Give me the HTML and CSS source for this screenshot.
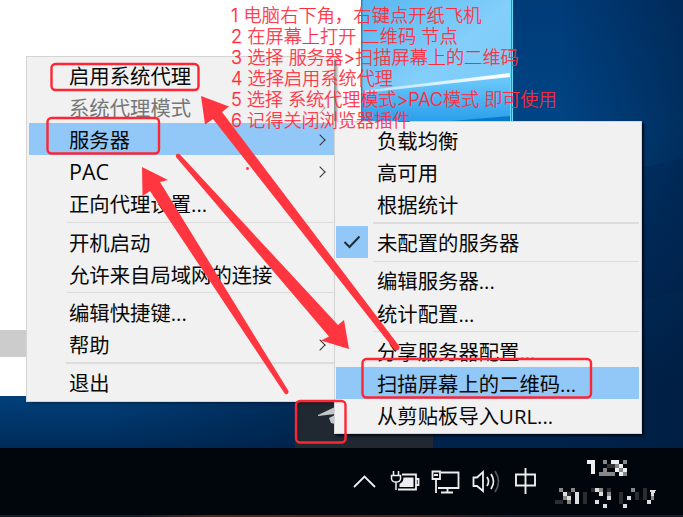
FILE: index.html
```html
<!DOCTYPE html>
<html lang="zh-CN">
<head>
<meta charset="utf-8">
<title>系统代理设置</title>
<link rel="stylesheet" href="styles.css">
</head>
<body>
<main class="desktop">
  <svg class="wallpaper" viewBox="0 0 683 517">
    <defs>
      <linearGradient id="night" x1="0" y1="0" x2="0" y2="1"><stop offset="0" stop-color="#003b78"/><stop offset=".28" stop-color="#004585"/><stop offset=".48" stop-color="#003b72"/><stop offset=".85" stop-color="#00234b"/></linearGradient>
      <linearGradient id="side"><stop offset="0" stop-color="#001a3b" stop-opacity="0"/><stop offset="1" stop-color="#001a3b" stop-opacity=".5"/></linearGradient>
      <linearGradient id="floor" x1="0" y1="0" x2="0" y2="1"><stop offset="0" stop-color="#00407b"/><stop offset="1" stop-color="#002b58"/></linearGradient>
      <linearGradient id="dusk"><stop offset="0" stop-color="#001d40" stop-opacity="0"/><stop offset="1" stop-color="#001d40" stop-opacity=".55"/></linearGradient>
      <linearGradient id="sky" x1="0" y1="0" x2="1" y2="1"><stop offset="0" stop-color="#55b7f2"/><stop offset=".5" stop-color="#83cefa"/><stop offset="1" stop-color="#7bcbfb"/></linearGradient>
      <linearGradient id="lower" x1="0" y1="0" x2="0" y2="1"><stop offset="0" stop-color="#70cbfc"/><stop offset="1" stop-color="#2a9eeb"/></linearGradient>
      <linearGradient id="ray"><stop offset="0" stop-color="#fff" stop-opacity=".4"/><stop offset="1" stop-color="#fff"/></linearGradient>
    </defs>
    <rect width="683" height="450" fill="url(#night)"/>
    <rect x="560" width="123" height="450" fill="url(#side)"/>
    <path d="M642 168 683 158V290L642 300Z" fill="#001d46" opacity=".25"/>
    <rect y="396" width="300" height="52" fill="url(#floor)"/>
    <rect x="110" y="396" width="190" height="52" fill="url(#dusk)"/>
    <rect width="361" height="396" fill="#fff"/>
    <rect y="330" width="26" height="27" fill="#ccc"/>
    <rect x="361" width="152" height="122" fill="url(#sky)"/>
    <path d="M361 94 511 76V122H361Z" fill="url(#lower)"/>
    <path d="M361 91 511 73V77L361 93Z" fill="url(#ray)"/>
    <path d="M440 122 511 116V122Z" fill="#0879ca"/>
    <path d="M361 0h1.5v122H361z" fill="#2d83b6"/>
    <path d="M510 0h3v122h-3z" fill="#69d9f8"/><path d="M511 0h1v122h-1z" fill="#298fc3"/>
    <path d="M295 402H433V448H295Z" fill="#202832"/>
    <path d="M318 415 335 407V414L318 416ZM329 418 335 415V424L331 423Z" fill="#c4c7ca"/>
  </svg>

  <nav class="menu main-menu">
    <div class="item">启用系统代理</div>
    <div class="item disabled">系统代理模式<i class="chevron"></i></div>
    <div class="item active">服务器<i class="chevron"></i></div>
    <div class="item"><span class="latin">PAC</span><i class="chevron"></i></div>
    <div class="item">正向代理设置...</div>
    <hr>
    <div class="item">开机启动</div>
    <div class="item">允许来自局域网的连接</div>
    <hr>
    <div class="item">编辑快捷键...</div>
    <div class="item">帮助<i class="chevron"></i></div>
    <hr>
    <div class="item">退出</div>
  </nav>

  <nav class="menu server-menu">
    <div class="item">负载均衡</div>
    <div class="item">高可用</div>
    <div class="item">根据统计</div>
    <hr>
    <div class="item"><span class="check"><svg width="18" height="14" viewBox="0 0 18 14"><path d="M1.5 7 6.5 12 16.500 1.500" fill="none" stroke="#222a32" stroke-width="2"/></svg></span>未配置的服务器</div>
    <hr>
    <div class="item">编辑服务器...</div>
    <div class="item">统计配置...</div>
    <hr>
    <div class="item">分享服务器配置...</div>
    <div class="item active">扫描屏幕上的二维码...</div>
    <div class="item">从剪贴板导入URL...</div>
  </nav>

  <footer class="taskbar">
    <svg width="683" height="69" viewBox="0 448 683 69" fill="none" stroke="#eee" stroke-width="1.8">
      <path d="M354 487 364.500 476.500 375 487"/>
      <path d="M402 474.500H416V489.500H398M416 479H418.500V485H416"/>
      <path d="M403.500 477.500H413.500V487H399.500V484Q403.500 482 403.500 477.500Z" fill="#eee" stroke="none"/>
      <path d="M393.500 471V476M398.500 471V476M391.500 475.500H400.500V479Q400 482 396 482 392 482 391.500 479ZM396 482V490" stroke-width="1.5"/>
      <path d="M441 472.500H458.500V488H438M447.500 488V492.500M441 492.500H453M432.500 471.500H440V479H432.500ZM434 475H438M436 479V493"/>
      <path d="M473.500 477.500H477L483 472V491L477 486H473.500Z"/>
      <path d="M487 477Q490 481.500 487 486M491 474Q496 481.500 491 489"/>
      <path d="M495 471Q502 481.500 495 492" stroke="#555"/>
      <path d="M516 474.500H535V485.500H516ZM525.500 468V494" stroke-width="1.9"/>
    </svg>
    <svg class="clock" width="112" height="60" viewBox="550 450 112 60" shape-rendering="crispEdges">
      <path d="M587 460h8v14h-4v-10h-4zM611 460h8v4h-8zM619 464h4v4h-4zM615 468h4v4h-4zM623 468h4v4h-4zM619 472h4v4h-4z" fill="#eee"/>
      <path d="M603 460h4v4h-4zM603 468h4v4h-4zM599 472h16v4h-16zM623 460h4v4h-4zM615 464h4v4h-4zM619 468h4v4h-4zM623 472h4v4h-4z" fill="#888"/>
      <path d="M607 464h8v4h-8z" fill="#333"/>
      <path d="M563 492h4v4h-4zM567 496h4v4h-4zM575 492h4v12h-4zM595 488h4v4h-4zM599 492h4v4h-4zM595 500h4v4h-4zM603 504h4v4h-4zM607 496h4v4h-4zM627 496h4v4h-4zM623 504h4v4h-4zM650 490h6l-3 7h-2v-4zM647 500h4v4h-4z" fill="#ddd"/>
      <path d="M559 488h4v4h-4zM563 496h4v4h-4zM567 500h4v4h-4zM571 488h4v4h-4zM599 488h4v4h-4zM607 492h4v4h-4zM631 488h4v4h-4zM651 496h3v4h-3z" fill="#888"/>
      <path d="M555 500h8v4h-8zM567 492h4v4h-4zM583 492h4v12h-4zM591 488h4v4h-4zM607 488h4v4h-4zM619 492h4v12h-4zM635 492h4v8h-4zM643 488h4v12h-4z" fill="#2b2d31"/>
    </svg>
    <div class="edge"></div>
  </footer>

  <svg class="marks" viewBox="0 0 683 517">
    <g fill="none" stroke="#ff2634" stroke-width="2.400">
      <rect x="51.500" y="64" width="147" height="26" rx="4"/>
      <rect x="47.500" y="118" width="111.500" height="35.500" rx="4"/>
      <rect x="362.500" y="359" width="228.500" height="38.500" rx="4"/>
      <rect x="296" y="401" width="49.500" height="41.500" rx="4"/>
    </g>
    <g fill="#ff3640">
      <path d="M201 96 229 106.500 222 112 399.500 346.500Q400 351 395 350.500L213 119 205 124.500Z"/>
      <path d="M142 167 168 180 160 182 288.500 391Q289 395 285 394L150 191 142.500 196Z"/>
      <path d="M179.500 154 338 325 344 320 349 349 321 340.500 329 336.500 176 157Q175 153 179.500 154Z"/>
      <circle cx="247.500" cy="168.500" r="1.400"/>
    </g>
  </svg>

  <section class="notes">
    <p class="wide">1 电脑右下角，右键点开纸飞机</p>
    <p>2 在屏幕上打开 二维码 节点</p>
    <p>3 选择 服务器&gt;扫描屏幕上的二维码</p>
    <p>4 选择启用系统代理</p>
    <p class="tight">5 选择 系统代理模式&gt;PAC模式 即可使用</p>
    <p>6 记得关闭浏览器插件</p>
  </section>
</main>
</body>
</html>
```

FILE: styles.css
```css
* { box-sizing: border-box; }
body { margin: 0; }
.desktop {
  position: relative;
  width: 683px;
  height: 517px;
  overflow: hidden;
  background: #002b58;
  font-family: "Open Sans", "Noto Sans CJK SC", sans-serif;
}
.wallpaper, .marks { position: absolute; inset: 0; width: 683px; height: 517px; }
.menu {
  position: absolute;
  padding: 2px;
  border: 1px solid #d4d4d4;
  background: #f1f1f1;
  color: #080808;
  font-size: 20.35px;
}
.main-menu { left: 26px; top: 56px; width: 308px; height: 346px; padding-right: 0; border-right: 0; box-shadow: 4px 2px 3px -1px rgb(0 0 0 / 45%); }
.server-menu { left: 334px; top: 121px; width: 308px; height: 313px; padding-left: 1px; box-shadow: 2px 2px 2px rgb(0 0 15 / 75%); }
.item {
  position: relative;
  display: flex;
  align-items: center;
  height: 32.15px;
  padding: 1.5px 0 0 40px;
  line-height: 30px;
  white-space: nowrap;
}
.server-menu .item { padding-left: 41px; }
.latin { font-size: 21.5px; }
.menu .active { background: #91c8f8; }
.menu .disabled { color: #777; }
.menu hr { height: 1.5px; margin: 2px 0 2.5px 37px; border: 0; background: #dcdcdc; }
.chevron {
  width: 8px;
  height: 8px;
  margin: 0 10px 0 auto;
  border: solid #333;
  border-width: 1.6px 1.6px 0 0;
  transform: rotate(45deg);
}
.disabled .chevron { border-color: #aaa; }
.check {
  position: absolute;
  left: 0;
  top: 0;
  display: grid;
  place-items: center;
  width: 32px;
  height: 32px;
  background: #91c8f8;
}
.taskbar { position: absolute; left: 0; bottom: 0; width: 683px; height: 69px; background: #01060c; }
.taskbar svg { display: block; }
.taskbar .clock { position: absolute; left: 550px; top: 2px; }
.edge { position: absolute; left: 0; bottom: 0; width: 100%; height: 2px; background: linear-gradient(90deg, #151c26 20%, #4b2a20 30%, #44251d 60%, #171b25 75%); }
.notes {
  position: absolute;
  left: 231px;
  top: 5px;
  color: #ff2a3a;
  font-family: Inter, "Noto Sans CJK SC", sans-serif;
  font-size: 18.2px;
  font-weight: 300;
  line-height: 21px;
  white-space: nowrap;
  -webkit-text-stroke: .25px #ff2a3a;
}
.notes p { margin: 0; }
.notes .wide { letter-spacing: .12px; }
.notes .tight { letter-spacing: -.1px; }
```
